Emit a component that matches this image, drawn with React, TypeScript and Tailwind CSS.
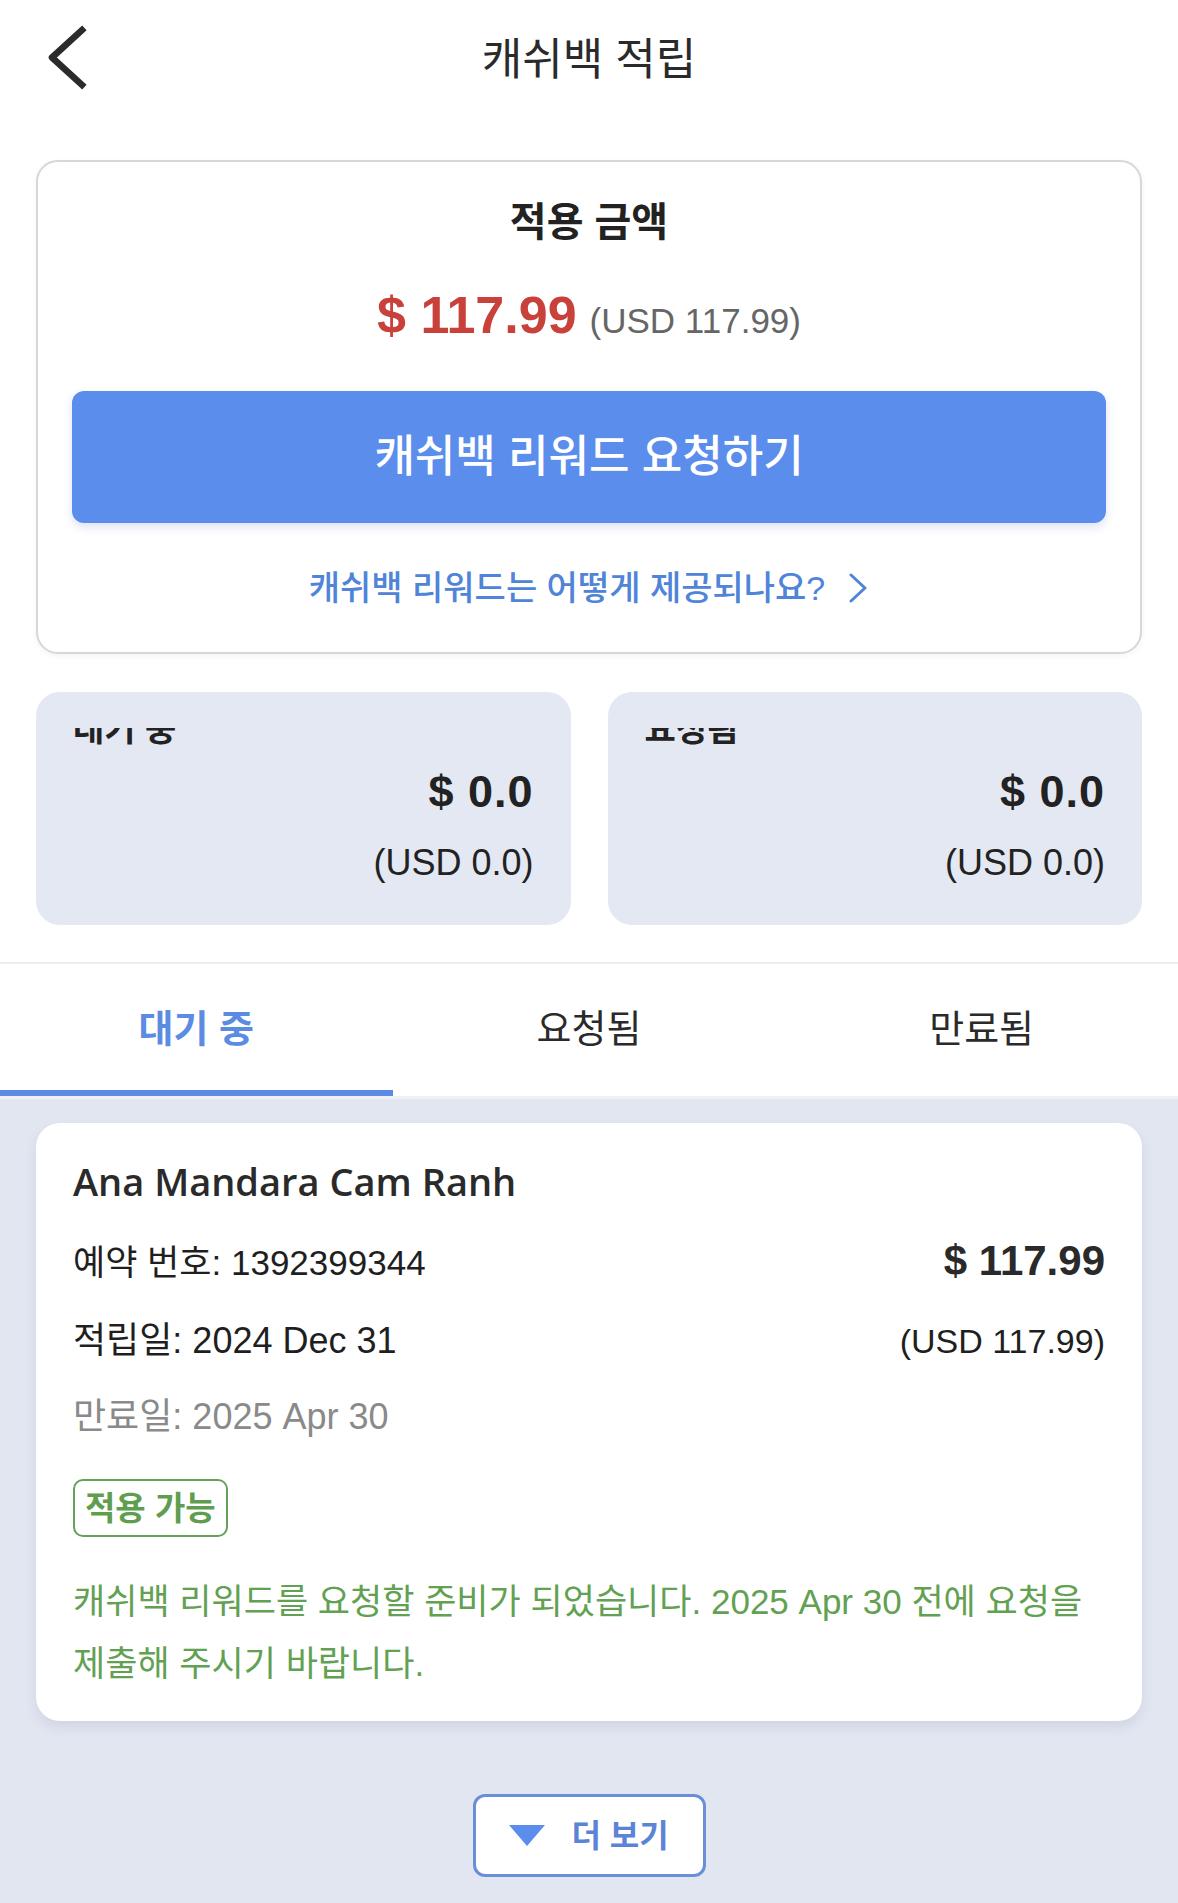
import React from 'react';

const KR = 'font-["Liberation_Sans","Noto_Sans_CJK_KR",sans-serif]';

const SummaryBox: React.FC<{ label: string; amount: string; usd: string }> = ({ label, amount, usd }) => (
  <div className="h-[233px] rounded-[24px] bg-[#e4e8f3] pl-[37px] pr-[37px] pt-[36px] flex flex-col">
    {/* label is cut off at the top in the original */}
    <div className="h-[18px] overflow-hidden flex items-end">
      <span className="text-[34px] leading-none font-bold text-[#222] whitespace-nowrap">{label}</span>
    </div>
    <div className="mt-[23px] text-right text-[45px] leading-none font-bold text-[#222] tracking-[1px]">{amount}</div>
    <div className="mt-[31px] text-right text-[36px] leading-none text-[#222]">{usd}</div>
  </div>
);

export default function App() {
  const tabs = ['대기 중', '요청됨', '만료됨'];
  const active = 0;

  return (
    <div className={`w-[1178px] min-h-[1903px] bg-white flex flex-col ${KR}`}>
      {/* header */}
      <div className="h-[120px] relative flex items-center justify-center">
        <svg className="absolute left-[40px] top-[22px]" width="52" height="72" viewBox="0 0 52 72" fill="none">
          <path d="M42 8 L12 35.5 L42 63" stroke="#2b2b2b" strokeWidth="6.5" strokeLinecap="square" strokeLinejoin="round" />
        </svg>
        <span className="text-[44px] leading-none text-[#2a2a2a]">캐쉬백 적립</span>
      </div>

      {/* applied amount card */}
      <div className="mx-[36px] mt-[40px] h-[494px] rounded-[22px] border-2 border-[#d6d7dc] shadow-[0_2px_6px_rgba(0,0,0,0.05)] bg-white flex flex-col items-center pt-[40px]">
        <div className="text-[40px] leading-none font-bold text-[#222]">적용 금액</div>
        <div className="mt-[47px] flex items-baseline">
          <span className="text-[52px] leading-none font-bold text-[#c8413b]">$ 117.99</span>
          <span className="ml-[13px] text-[35px] leading-none text-[#666]">(USD 117.99)</span>
        </div>
        <button className="mt-[50px] self-stretch mx-[34px] h-[132px] rounded-[12px] bg-[#5b8ded] shadow-[0_4px_10px_rgba(60,100,200,0.18)] flex items-center justify-center">
          <span className="text-[44px] leading-none font-medium text-white">캐쉬백 리워드 요청하기</span>
        </button>
        <div className="mt-[48px] flex items-center gap-[22px]">
          <span className="text-[34px] leading-none font-medium text-[#4f84d8]">캐쉬백 리워드는 어떻게 제공되나요?</span>
          <svg width="22" height="30" viewBox="0 0 22 30" fill="none">
            <path d="M4 2 L18 15 L4 28" stroke="#4f84d8" strokeWidth="3" strokeLinecap="round" strokeLinejoin="round" />
          </svg>
        </div>
      </div>

      {/* pending / requested */}
      <div className="mx-[36px] mt-[38px] grid grid-cols-2 gap-[37px]">
        <SummaryBox label="대기 중" amount="$ 0.0" usd="(USD 0.0)" />
        <SummaryBox label="요청됨" amount="$ 0.0" usd="(USD 0.0)" />
      </div>

      <div className="mt-[37px] h-[2px] bg-[#ececf2]" />

      {/* tabs */}
      <div className="grid grid-cols-3">
        {tabs.map((t, i) => (
          <div key={t} className="flex flex-col">
            <div className="h-[126px] pt-[4px] flex items-center justify-center">
              <span className={`text-[38px] leading-none ${i === active ? 'font-bold text-[#5b8be3]' : 'text-[#2a2a2a]'}`}>{t}</span>
            </div>
            <div className={`h-[6px] ${i === active ? 'bg-[#5b8be3]' : 'bg-white'}`} />
          </div>
        ))}
      </div>

      {/* list */}
      <div className="flex-1 bg-[#e2e6f1] border-t-[3px] border-[#eef0f6] px-[36px] pt-[24px] pb-[25px] flex flex-col">
        <div className="rounded-[24px] bg-white shadow-[0_6px_12px_rgba(80,90,130,0.12)] pl-[37px] pr-[37px] pt-[39px] pb-[26px]">
          <div className="font-['Open_Sans',sans-serif] text-[38px] leading-none font-semibold text-[#2a2a2a]">Ana Mandara Cam Ranh</div>
          <div className="mt-[40px] flex justify-between items-baseline">
            <span className="text-[35px] leading-none text-[#1f1f1f]">예약 번호: 1392399344</span>
            <span className="text-[42px] leading-none font-bold text-[#2a2a2a]">$ 117.99</span>
          </div>
          <div className="mt-[41px] flex justify-between items-baseline">
            <span className="text-[36px] leading-none text-[#1f1f1f]">적립일: 2024 Dec 31</span>
            <span className="text-[34px] leading-none text-[#1f1f1f]">(USD 117.99)</span>
          </div>
          <div className="mt-[40px] text-[36px] leading-none text-[#8a8a8a]">만료일: 2025 Apr 30</div>
          <div className="mt-[44px] w-fit h-[58px] px-[10px] rounded-[10px] border-2 border-[#66a05a] flex items-center">
            <span className="text-[33px] leading-none font-bold text-[#5f9e4f]">적용 가능</span>
          </div>
          <p className="mt-[34px] text-[35px] leading-[62px] text-[#62a152]">
            캐쉬백 리워드를 요청할 준비가 되었습니다. 2025 Apr 30 전에 요청을 제출해 주시기 바랍니다.
          </p>
        </div>

        <button className="mt-[73px] self-center w-[233px] h-[83px] rounded-[12px] border-[3px] border-[#6b8fd6] bg-white flex items-center justify-center gap-[26px]">
          <svg width="36" height="21" viewBox="0 0 36 21">
            <path d="M0 0 H36 L18 21 Z" fill="#5b8ded" />
          </svg>
          <span className="text-[32px] leading-none font-bold text-[#5b84d6]">더 보기</span>
        </button>
      </div>
    </div>
  );
}
